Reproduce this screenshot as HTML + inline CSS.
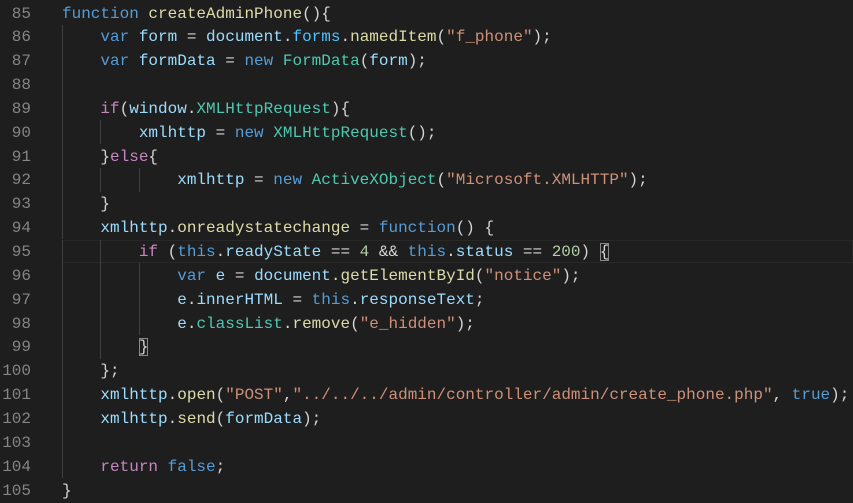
<!DOCTYPE html>
<html><head><meta charset="utf-8"><style>
html,body{margin:0;padding:0;background:#1e1e1e;width:853px;height:503px;overflow:hidden}
#w{position:relative;width:853px;height:503px;font-family:"Liberation Mono",monospace;font-size:16px}
.l{position:absolute;left:0;height:23.85px;line-height:23.85px;white-space:pre;width:853px}
.n{position:absolute;left:0;width:31px;text-align:right;color:#858585;top:1.5px}
.c{position:absolute;left:62px;color:#d4d4d4;top:1.5px}
.g{position:absolute;top:0;width:1px;height:23.85px;background:#404040}
.k{color:#569cd6}.p{color:#c586c0}.v{color:#9cdcfe}.f{color:#dcdcaa}.t{color:#4ec9b0}.s{color:#ce9178}.d{color:#b5cea8}.pr{color:#4fc1ff}
.cur{position:absolute;left:62px;top:0;right:0;height:21.85px;border:1px solid #282828}
.bm{outline:1px solid #888;outline-offset:-1px}
</style></head><body><div id="w">
<div class="l" style="top:1px"><span class="n">85</span><span class="c"><span class="k">function</span> <span class="f">createAdminPhone</span>(){</span></div>
<div class="l" style="top:24.85px"><span class="g" style="left:62px"></span><span class="n">86</span><span class="c">    <span class="k">var</span> <span class="v">form</span> = <span class="v">document</span>.<span class="pr">forms</span>.<span class="f">namedItem</span>(<span class="s">"f_phone"</span>);</span></div>
<div class="l" style="top:48.7px"><span class="g" style="left:62px"></span><span class="n">87</span><span class="c">    <span class="k">var</span> <span class="v">formData</span> = <span class="k">new</span> <span class="t">FormData</span>(<span class="v">form</span>);</span></div>
<div class="l" style="top:72.55px"><span class="g" style="left:62px"></span><span class="n">88</span></div>
<div class="l" style="top:96.4px"><span class="g" style="left:62px"></span><span class="n">89</span><span class="c">    <span class="p">if</span>(<span class="v">window</span>.<span class="t">XMLHttpRequest</span>){</span></div>
<div class="l" style="top:120.25px"><span class="g" style="left:62px"></span><span class="g" style="left:100px"></span><span class="n">90</span><span class="c">        <span class="v">xmlhttp</span> = <span class="k">new</span> <span class="t">XMLHttpRequest</span>();</span></div>
<div class="l" style="top:144.1px"><span class="g" style="left:62px"></span><span class="n">91</span><span class="c">    }<span class="p">else</span>{</span></div>
<div class="l" style="top:167.95px"><span class="g" style="left:62px"></span><span class="g" style="left:100px"></span><span class="g" style="left:139px"></span><span class="n">92</span><span class="c">            <span class="v">xmlhttp</span> = <span class="k">new</span> <span class="t">ActiveXObject</span>(<span class="s">"Microsoft.XMLHTTP"</span>);</span></div>
<div class="l" style="top:191.8px"><span class="g" style="left:62px"></span><span class="n">93</span><span class="c">    }</span></div>
<div class="l" style="top:215.65px"><span class="g" style="left:62px"></span><span class="n">94</span><span class="c">    <span class="v">xmlhttp</span>.<span class="f">onreadystatechange</span> = <span class="k">function</span>() {</span></div>
<div class="l" style="top:239.5px"><span class="cur"></span><span class="g" style="left:62px"></span><span class="g" style="left:100px"></span><span class="n">95</span><span class="c">        <span class="p">if</span> (<span class="k">this</span>.<span class="v">readyState</span> == <span class="d">4</span> &amp;&amp; <span class="k">this</span>.<span class="v">status</span> == <span class="d">200</span>) <span class="bm">{</span></span></div>
<div class="l" style="top:263.35px"><span class="g" style="left:62px"></span><span class="g" style="left:100px"></span><span class="g" style="left:139px"></span><span class="n">96</span><span class="c">            <span class="k">var</span> <span class="v">e</span> = <span class="v">document</span>.<span class="f">getElementById</span>(<span class="s">"notice"</span>);</span></div>
<div class="l" style="top:287.2px"><span class="g" style="left:62px"></span><span class="g" style="left:100px"></span><span class="g" style="left:139px"></span><span class="n">97</span><span class="c">            <span class="v">e</span>.<span class="v">innerHTML</span> = <span class="k">this</span>.<span class="v">responseText</span>;</span></div>
<div class="l" style="top:311.05px"><span class="g" style="left:62px"></span><span class="g" style="left:100px"></span><span class="g" style="left:139px"></span><span class="n">98</span><span class="c">            <span class="v">e</span>.<span class="pr" style="color:#4ec9b0">classList</span>.<span class="f">remove</span>(<span class="s">"e_hidden"</span>);</span></div>
<div class="l" style="top:334.9px"><span class="g" style="left:62px"></span><span class="g" style="left:100px"></span><span class="n">99</span><span class="c">        <span class="bm">}</span></span></div>
<div class="l" style="top:358.75px"><span class="g" style="left:62px"></span><span class="n">100</span><span class="c">    };</span></div>
<div class="l" style="top:382.6px"><span class="g" style="left:62px"></span><span class="n">101</span><span class="c">    <span class="v">xmlhttp</span>.<span class="f">open</span>(<span class="s">"POST"</span>,<span class="s">"../../../admin/controller/admin/create_phone.php"</span>, <span class="k">true</span>);</span></div>
<div class="l" style="top:406.45px"><span class="g" style="left:62px"></span><span class="n">102</span><span class="c">    <span class="v">xmlhttp</span>.<span class="f">send</span>(<span class="v">formData</span>);</span></div>
<div class="l" style="top:430.3px"><span class="g" style="left:62px"></span><span class="n">103</span></div>
<div class="l" style="top:454.15px"><span class="g" style="left:62px"></span><span class="n">104</span><span class="c">    <span class="p">return</span> <span class="k">false</span>;</span></div>
<div class="l" style="top:478px"><span class="n">105</span><span class="c">}</span></div>
</div></body></html>
